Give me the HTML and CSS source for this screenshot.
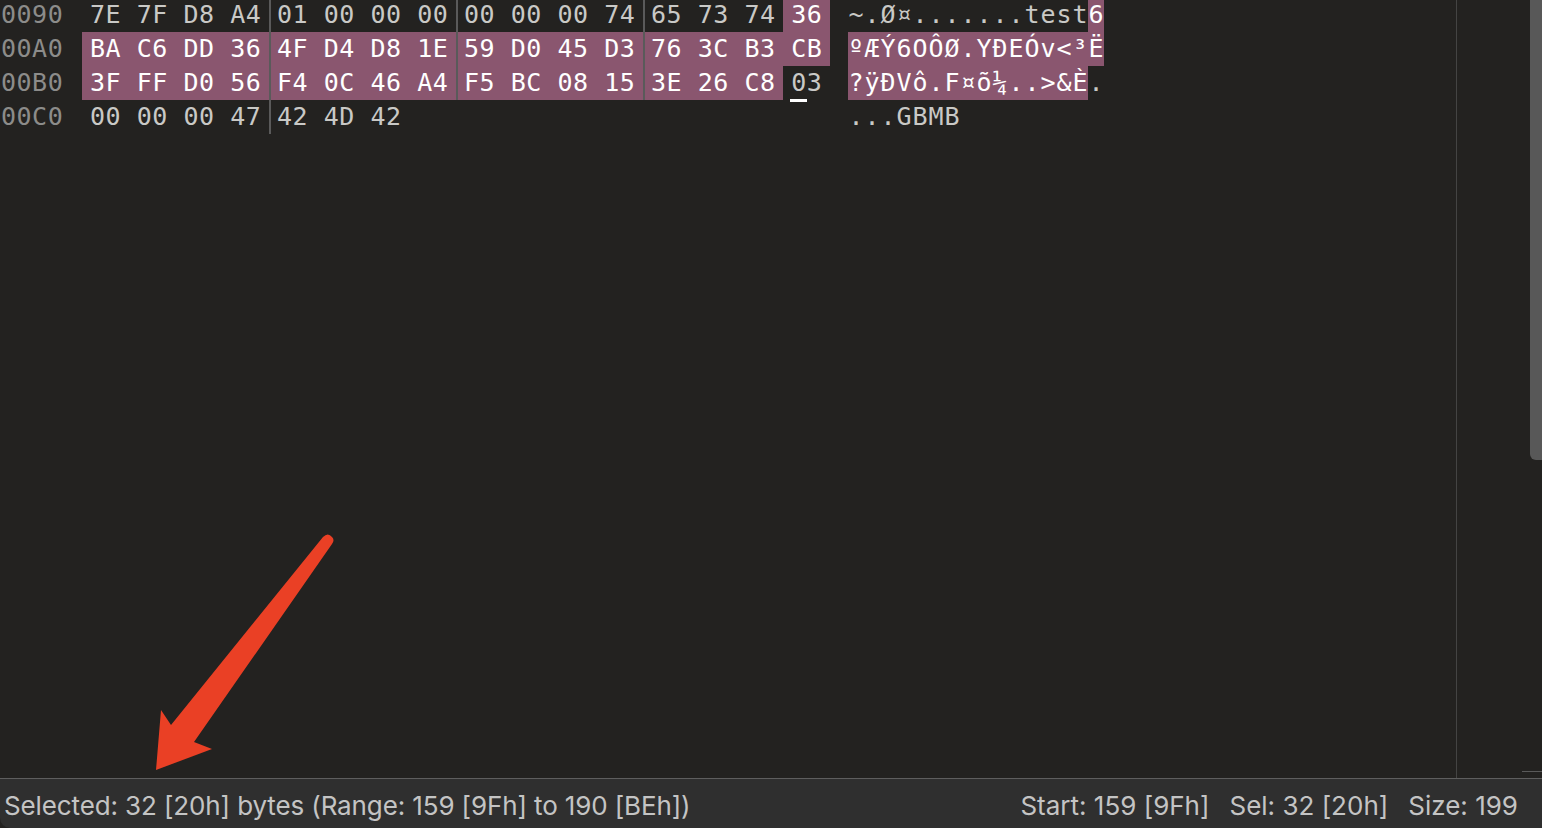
FILE: index.html
```html
<!DOCTYPE html>
<html lang="en">
<head>
    <meta charset="UTF-8">
    <meta name="viewport" content="width=device-width, initial-scale=1.0">
    <title>Hex Editor</title>
    <link rel="stylesheet" href="styles.css">
</head>
<body>

<div class="editor">
    <div class="hex-view" id="hex-view">
        <!-- rows are filled in by the script below -->
    </div>
    <div class="ruler"></div>
    <div class="scroll-thumb"></div>
    <div class="ruler-tick"></div>
    <svg class="arrow" width="400" height="300" viewBox="0 0 400 300">
        <path d="M156 250 L161 190 L171 205 L323 17 Q328 12 332 17 Q335 20 332 24 L194 222 L212 229 Z" fill="#ea4025"/>
    </svg>
</div>

<div class="status-bar">
    <span class="status-left">Selected: 32 [20h] bytes (Range: 159 [9Fh] to 190 [BEh])</span>
    <div class="status-right">
        <span>Start: 159 [9Fh]</span>
        <span>Sel: 32 [20h]</span>
        <span>Size: 199</span>
    </div>
</div>

<script>
    const rows = [
        { addr: '0090', hex: '7E 7F D8 A4 01 00 00 00 00 00 00 74 65 73 74 36', ascii: '~.Ø¤.......test6' },
        { addr: '00A0', hex: 'BA C6 DD 36 4F D4 D8 1E 59 D0 45 D3 76 3C B3 CB', ascii: 'ºÆÝ6OÔØ.YÐEÓv<³Ë' },
        { addr: '00B0', hex: '3F FF D0 56 F4 0C 46 A4 F5 BC 08 15 3E 26 C8 03', ascii: '?ÿÐVô.F¤õ¼..>&È.' },
        { addr: '00C0', hex: '00 00 00 47 42 4D 42', ascii: '...GBMB' }
    ];
    const selStart = 159, selEnd = 190, baseOffset = 144;
    const view = document.getElementById('hex-view');

    rows.forEach((row, r) => {
        const el = document.createElement('div');
        el.className = 'row';

        const addr = document.createElement('span');
        addr.className = 'addr';
        addr.innerText = row.addr;
        el.appendChild(addr);

        const hexCol = document.createElement('div');
        hexCol.className = 'hex-col';
        const asciiCol = document.createElement('div');
        asciiCol.className = 'ascii-col';

        const bytes = row.hex.split(' ');
        bytes.forEach((value, i) => {
            const offset = baseOffset + r * 16 + i;
            const selected = offset >= selStart && offset <= selEnd;
            const cell = document.createElement('span');
            cell.className = 'cell';
            if (i > 0 && i % 4 === 0) cell.classList.add('group-start');
            if (selected) cell.classList.add('selected');
            if (offset === selEnd + 1) cell.classList.add('cursor');
            cell.innerText = value;
            hexCol.appendChild(cell);

            const ch = document.createElement('span');
            ch.className = selected ? 'char selected' : 'char';
            ch.innerText = row.ascii[i];
            asciiCol.appendChild(ch);
        });
        el.appendChild(hexCol);
        el.appendChild(asciiCol);
        view.appendChild(el);
    });
</script>

</body>
</html>
```

FILE: styles.css
```css
html, body {
    height: 100%;
}
body {
    margin: 0;
    padding: 0;
    background-color: #232220;
    display: flex;
    flex-direction: column;
    overflow: hidden;
}
.editor {
    position: relative;
    flex: 1;
    overflow: hidden;
    background-color: #232220;
}
.hex-view {
    margin-top: -2px;
    font-family: "DejaVu Sans Mono", monospace;
    font-size: 25px;
    letter-spacing: 0.5px;
}
.row {
    display: flex;
    height: 34px;
    line-height: 34px;
}
.addr {
    width: 82px;
    padding-left: 1px;
    box-sizing: border-box;
    color: #8c8c8a;
}
.hex-col {
    display: flex;
    width: 748px;
    margin-right: 18px;
    color: #c9c9c6;
}
.cell {
    position: relative;
    flex: 0 0 46.75px;
    box-sizing: border-box;
    padding-left: 8px;
}
.group-start::before {
    content: "";
    position: absolute;
    left: 0;
    top: 0;
    bottom: 0;
    width: 2px;
    background-color: #5a5a5a;
}
.selected {
    background-color: #8a566f;
    color: #ffffff;
}
.cursor::after {
    content: "";
    position: absolute;
    left: 7px;
    bottom: -2px;
    width: 17px;
    height: 3px;
    background-color: #ffffff;
}
.ascii-col {
    display: flex;
    color: #c9c9c6;
}
.char {
    flex: 0 0 16px;
    width: 16px;
    text-align: center;
    letter-spacing: 0;
}
.ruler {
    position: absolute;
    left: 1456px;
    top: 0;
    bottom: 0;
    width: 1px;
    background-color: #444443;
}
.ruler-tick {
    position: absolute;
    right: 0;
    bottom: 6px;
    width: 20px;
    height: 1px;
    background-color: #5a5a5a;
}
.scroll-thumb {
    position: absolute;
    right: 0;
    top: 0;
    width: 12px;
    height: 460px;
    background-color: #585858;
    border-bottom-left-radius: 6px;
}
.arrow {
    position: absolute;
    left: 0;
    top: 520px;
}
.status-bar {
    display: flex;
    justify-content: space-between;
    align-items: center;
    height: 50px;
    padding: 3px 24px 0 4px;
    box-sizing: border-box;
    background-color: #2f2f2f;
    border-top: 1px solid #5e5e5e;
    border-bottom-left-radius: 10px;
    color: #c4c4c4;
    font-family: "Inter", sans-serif;
    font-size: 26px;
    white-space: nowrap;
}
.status-left {
    letter-spacing: -0.12px;
}
.status-right {
    display: flex;
    gap: 20px;
}
```
